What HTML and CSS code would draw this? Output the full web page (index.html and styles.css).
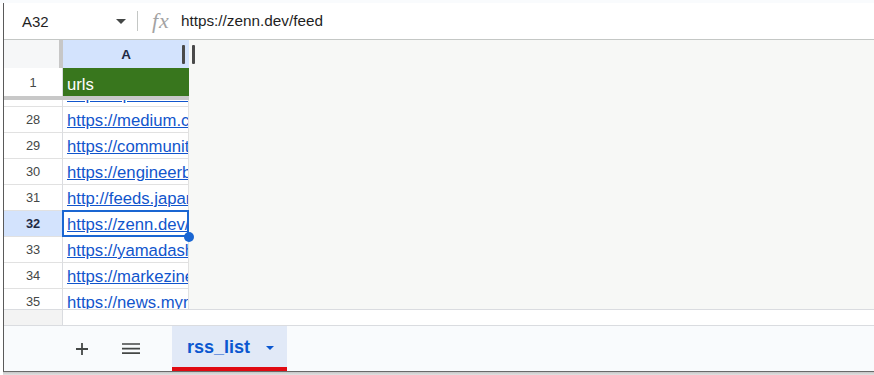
FILE: index.html
```html
<!DOCTYPE html>
<html lang="en">
<head>
    <meta charset="UTF-8">
    <meta name="viewport" content="width=device-width, initial-scale=1.0">
    <title>rss_list</title>
    <link rel="stylesheet" href="styles.css">
</head>
<body>
  <div class="topstrip"></div>
  <div class="window">
    <div class="formula-bar">
      <div class="namebox">
        <span>A32</span>
        <span class="caret"></span>
      </div>
      <div class="divider"></div>
      <span class="fx">fx</span>
      <span class="formula">https://zenn.dev/feed</span>
    </div>

    <div class="grid-area">
      <div class="sheet">
        <div class="row header-row">
          <div class="corner"></div>
          <div class="colhead">A</div>
          <span class="handle h1"></span>
          <span class="handle h2"></span>
        </div>
        <div class="row row-1">
          <div class="rh">1</div>
          <div class="cell green">urls</div>
        </div>
        <div class="freeze-bar"></div>
        <div class="row partial">
          <div class="rh"></div>
          <div class="cell"><a href="#">https://qiita.com/</a></div>
        </div>
        <div class="row">
          <div class="rh">28</div>
          <div class="cell"><a href="#">https://medium.com/feed</a></div>
        </div>
        <div class="row">
          <div class="rh">29</div>
          <div class="cell"><a href="#">https://community.com/feed</a></div>
        </div>
        <div class="row">
          <div class="rh">30</div>
          <div class="cell"><a href="#">https://engineerblog.com/feed</a></div>
        </div>
        <div class="row">
          <div class="rh">31</div>
          <div class="cell"><a href="#">http://feeds.japan.cnet.com/rss</a></div>
        </div>
        <div class="row selected">
          <div class="rh">32</div>
          <div class="cell active"><a href="#">https://zenn.dev/feed</a><span class="fill-handle"></span></div>
        </div>
        <div class="row">
          <div class="rh">33</div>
          <div class="cell"><a href="#">https://yamadashy.github.io/feed</a></div>
        </div>
        <div class="row">
          <div class="rh">34</div>
          <div class="cell"><a href="#">https://markezine.jp/rss</a></div>
        </div>
        <div class="row">
          <div class="rh">35</div>
          <div class="cell"><a href="#">https://news.mynavi.jp/rss</a></div>
        </div>
      </div>
      <div class="offsheet"></div>
    </div>

    <div class="hscroll">
      <div class="hs-left"></div>
    </div>

    <div class="sheetbar">
      <button class="icon-btn add">
        <svg width="14" height="14" viewBox="0 0 14 14"><path d="M7 1v12M1 7h12" stroke="#444746" stroke-width="1.8" fill="none"/></svg>
      </button>
      <button class="icon-btn menu">
        <svg width="18" height="12" viewBox="0 0 18 12"><path d="M0 1h18M0 5.6h18M0 10.2h18" stroke="#444746" stroke-width="1.7" fill="none"/></svg>
      </button>
      <div class="tab">
        <span>rss_list</span>
        <span class="tab-caret"></span>
      </div>
    </div>
  </div>
  <div class="bottom-shade"></div>
</body>
</html>
```

FILE: styles.css
```css
* {
  box-sizing: border-box;
}
body {
  margin: 0;
  width: 874px;
  height: 375px;
  overflow: hidden;
  background: #fff;
  font-family: "Liberation Sans", Arial, sans-serif;
}
.topstrip {
  height: 3px;
  background: #f9fbfd;
}
.window {
  margin-left: 3px;
  border-left: 1px solid #5a5a5a;
  border-bottom: 1px solid #6a6a6a;
  background: #fff;
}

/* formula bar */
.formula-bar {
  height: 37px;
  display: flex;
  align-items: center;
  border-bottom: 1px solid #c4c7c5;
  color: #1f1f1f;
}
.namebox {
  width: 133px;
  display: flex;
  align-items: center;
  justify-content: space-between;
  padding-left: 18px;
  padding-right: 11px;
  font-size: 15px;
}
.caret {
  width: 0;
  height: 0;
  border-left: 5px solid transparent;
  border-right: 5px solid transparent;
  border-top: 5px solid #444746;
}
.divider {
  width: 1px;
  height: 20px;
  background: #c4c7c5;
}
.fx {
  margin-left: 14px;
  font-family: "Liberation Serif", serif;
  font-style: italic;
  font-size: 22px;
  letter-spacing: 1px;
  color: #a3a3a3;
  line-height: 1;
}
.formula {
  margin-left: 11px;
  font-size: 15.3px;
}

/* grid */
.grid-area {
  height: 269px;
  display: flex;
  overflow: hidden;
}
.sheet {
  width: 185px;
  flex-shrink: 0;
}
.offsheet {
  flex: 1;
  background: #f7f8f6;
}
.row {
  display: flex;
  height: 26px;
  position: relative;
}
.rh {
  width: 59px;
  flex-shrink: 0;
  border-right: 1px solid #dadce0;
  border-bottom: 1px solid #e1e1e1;
  display: flex;
  align-items: center;
  justify-content: center;
  font-size: 12.8px;
  color: #444746;
  background: #fff;
}
.cell {
  width: 126px;
  border-right: 1px solid #e1e1e1;
  border-bottom: 1px solid #e1e1e1;
  display: flex;
  align-items: flex-end;
  padding: 0 0 2px 4px;
  font-size: 16.7px;
  line-height: 19px;
  white-space: nowrap;
  overflow: hidden;
  position: relative;
}
.cell a {
  color: #1155cc;
  text-decoration: underline;
}
.header-row {
  height: 28px;
}
.corner {
  width: 59px;
  background: #f6f7f8;
  border-right: 4px solid #c7c7c7;
}
.colhead {
  width: 126px;
  background: #d3e3fd;
  display: flex;
  align-items: center;
  justify-content: center;
  font-size: 13.5px;
  font-weight: bold;
  color: #1f2a44;
}
.handle {
  position: absolute;
  top: 5px;
  width: 3px;
  height: 19px;
  border-radius: 1px;
  background: #4a4a4a;
}
.h1 {
  left: 178px;
}
.h2 {
  left: 188px;
  width: 2.5px;
}
.row-1 {
  height: 28px;
}
.row-1 .rh {
  border-bottom: none;
}
.green {
  background: #38761d;
  color: #fff;
  border-bottom: none;
  border-right: none;
}
.freeze-bar {
  height: 4px;
  background: #c8c8c8;
}
.partial {
  height: 7px;
}
.selected .rh {
  background: #d3e3fd;
  color: #1f2a44;
  font-weight: bold;
}
.cell.active {
  overflow: visible;
}
.cell.active a {
  overflow: hidden;
  display: block;
  max-width: 120px;
}
.cell.active::after {
  content: "";
  position: absolute;
  top: -1px;
  left: -1px;
  right: -1px;
  bottom: -1px;
  border: 2px solid #1a66d2;
}
.fill-handle {
  position: absolute;
  right: -6px;
  bottom: -6px;
  width: 10px;
  height: 10px;
  border-radius: 50%;
  background: #1a66d2;
  z-index: 2;
}

/* horizontal scrollbar */
.hscroll {
  height: 17px;
  border-top: 1px solid #dadce0;
  border-bottom: 1px solid #dadce0;
  background: #fff;
}
.hs-left {
  width: 59px;
  height: 100%;
  background: #f3f3f3;
  border-right: 1px solid #dadce0;
}

/* sheet tabs */
.sheetbar {
  height: 45px;
  background: #f9fbfd;
  display: flex;
  align-items: stretch;
  padding-left: 60px;
}
.icon-btn {
  width: 36px;
  border: none;
  background: none;
  padding: 0;
  display: flex;
  align-items: center;
  justify-content: center;
}
.menu {
  margin-left: 13px;
}
.tab {
  margin-left: 23px;
  width: 115px;
  background: #e1e9f7;
  border-bottom: 4px solid #e00a12;
  display: flex;
  align-items: center;
  padding-left: 15px;
  padding-top: 2px;
  font-size: 18px;
  font-weight: bold;
  color: #0b57d0;
}
.tab-caret {
  margin-left: 16px;
  width: 0;
  height: 0;
  border-left: 4px solid transparent;
  border-right: 4px solid transparent;
  border-top: 4px solid #0b57d0;
}
.bottom-shade {
  height: 3px;
  margin-left: 3px;
  background: linear-gradient(#c6c6c6, #e2e2e2);
}
```
